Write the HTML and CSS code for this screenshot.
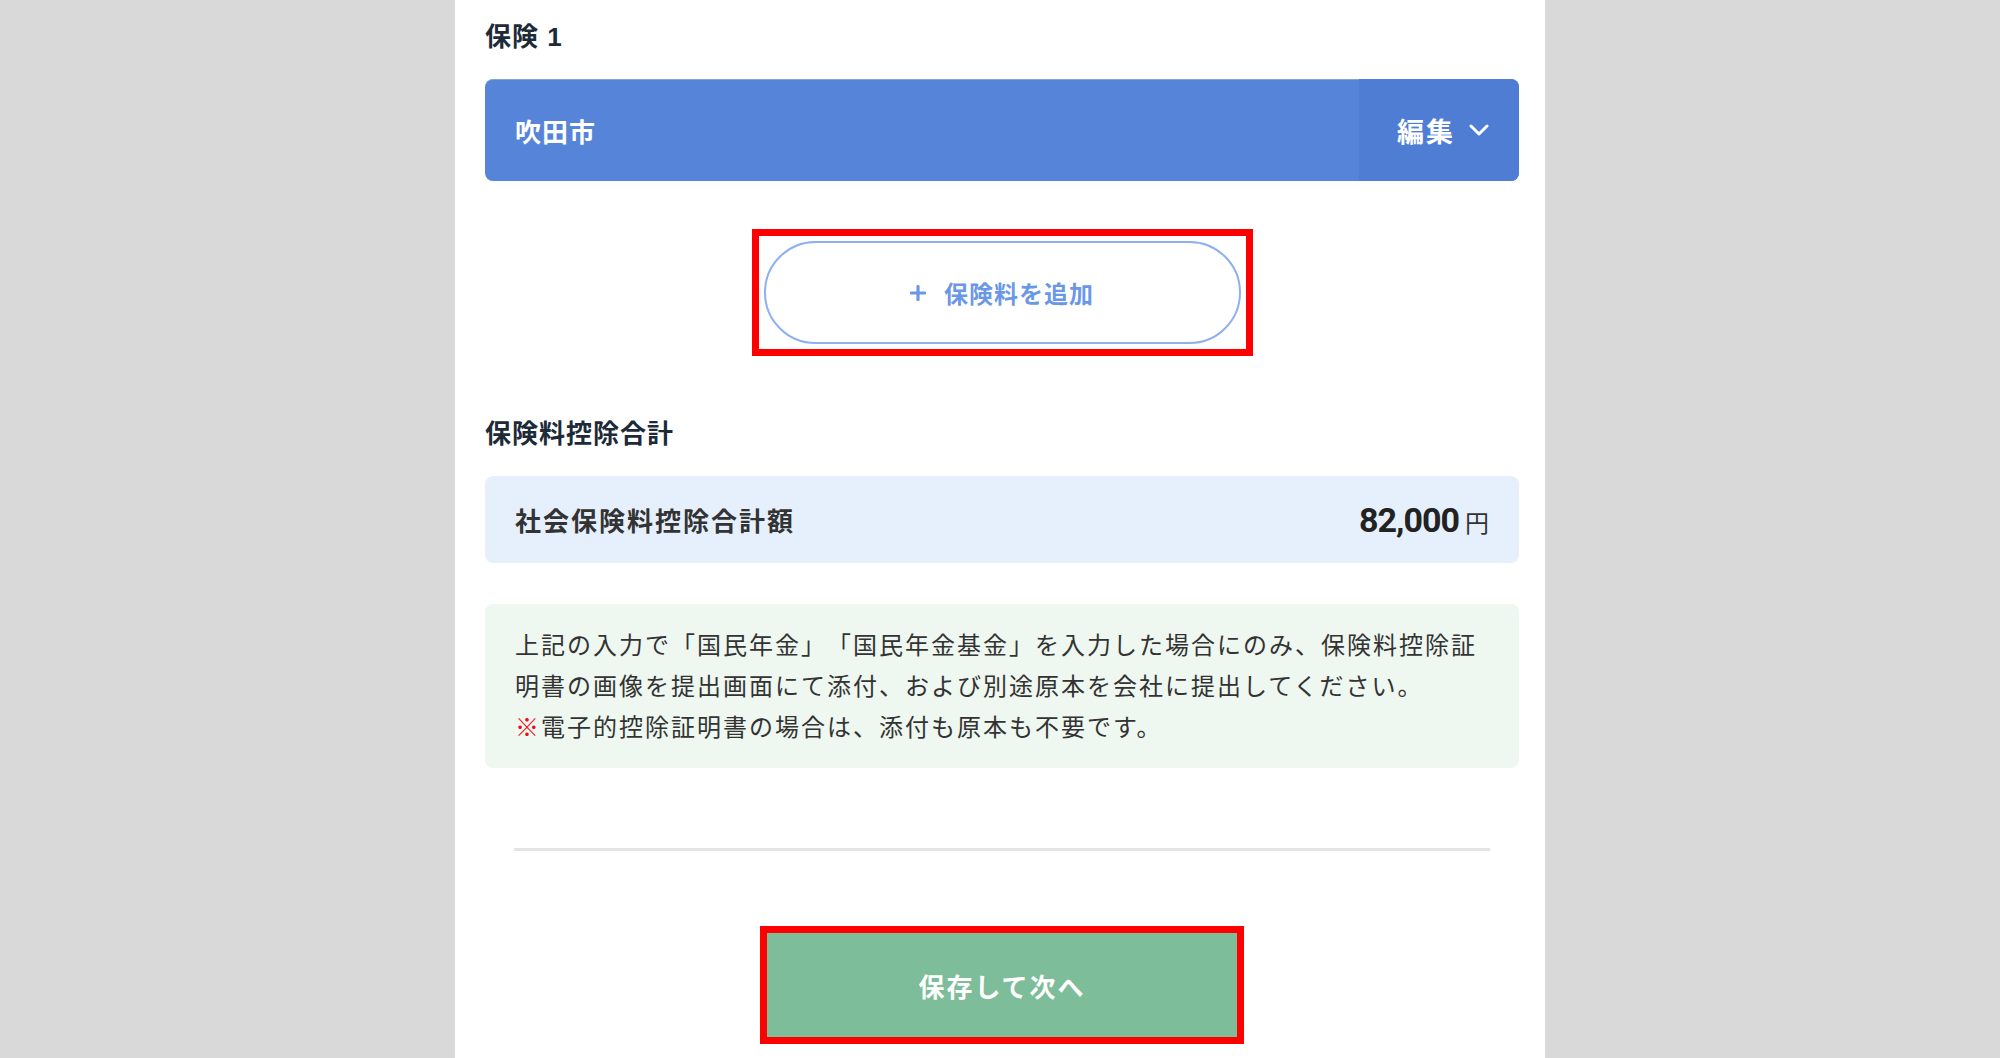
FILE: index.html
```html
<!DOCTYPE html>
<html lang="ja">
<head>
    <meta charset="UTF-8">
    <meta name="viewport" content="width=device-width, initial-scale=1.0">
    <title>社会保険料控除</title>
    <link rel="stylesheet" href="styles.css">
</head>
<body>
    <main class="page">
        <section class="insurance">
            <h2 class="section-title">保険 1</h2>
            <div class="entry-bar">
                <span class="entry-name">吹田市</span>
                <button class="entry-edit" type="button">
                    <span>編集</span>
                    <svg class="chevron" width="20" height="12" viewBox="0 0 20 12" aria-hidden="true">
                        <path d="M2 2 L10 10 L18 2" fill="none" stroke="#fff" stroke-width="3" stroke-linecap="round" stroke-linejoin="round"/>
                    </svg>
                </button>
            </div>
            <div class="action-row">
                <div class="highlight highlight-gap">
                    <button class="add-btn" type="button">
                        <svg class="plus" width="16" height="16" viewBox="0 0 16 16" aria-hidden="true">
                            <path d="M8 1.5 V14.5 M1.5 8 H14.5" stroke="#6b98e6" stroke-width="3.2" stroke-linecap="round"/>
                        </svg>
                        <span>保険料を追加</span>
                    </button>
                </div>
            </div>
        </section>

        <section class="total">
            <h2 class="section-title">保険料控除合計</h2>
            <div class="total-box">
                <span class="total-label">社会保険料控除合計額</span>
                <span class="total-value"><b>82,000</b><small>円</small></span>
            </div>
            <div class="notice">
                <p>上記の入力で「国民年金」「国民年金基金」を入力した場合にのみ、保険料控除証明書の画像を提出画面にて添付、および別途原本を会社に提出してください。</p>
                <p><span class="mark">※</span>電子的控除証明書の場合は、添付も原本も不要です。</p>
            </div>
        </section>

        <hr class="divider">

        <div class="action-row submit-row">
            <div class="highlight">
                <button class="submit-btn" type="button">保存して次へ</button>
            </div>
        </div>
    </main>
</body>
</html>
```

FILE: styles.css
```css
html, body {
    margin: 0;
    padding: 0;
    height: 100%;
}

body {
    background-color: #d9d9d9;
    font-family: "Liberation Sans", "Noto Sans CJK JP", sans-serif;
    color: #333;
    overflow: hidden;
}

.page {
    width: 1090px;
    height: 1058px;
    margin: 0 auto;
    padding: 19px 26px 0 30px;
    box-sizing: border-box;
    background-color: #fff;
}

.section-title {
    margin: 0 0 24px 0;
    font-size: 26px;
    line-height: 36px;
    letter-spacing: 1px;
    font-weight: bold;
    color: #1d2a38;
}

/* 保険の行 */
.entry-bar {
    display: flex;
    height: 102px;
    border-radius: 8px;
    overflow: hidden;
    background-color: #5684d8;
    box-shadow: inset 0 1px 0 rgba(255, 255, 255, 0.25);
}

.entry-name {
    flex: 1;
    display: flex;
    align-items: center;
    padding-left: 30px;
    font-size: 26px;
    font-weight: bold;
    letter-spacing: 1px;
    color: #fff;
}

.entry-edit {
    display: flex;
    align-items: center;
    gap: 14px;
    width: 160px;
    padding: 0 28px 0 38px;
    box-sizing: border-box;
    border: none;
    background-color: #4f7dd3;
    color: #fff;
    font-family: inherit;
    font-size: 27px;
    font-weight: bold;
    letter-spacing: 2px;
    cursor: pointer;
}

.chevron {
    flex-shrink: 0;
}

/* 赤枠で囲まれたボタン */
.action-row {
    display: flex;
    justify-content: center;
    margin-top: 48px;
}

.highlight {
    border: 7px solid #ff0000;
}

.highlight-gap {
    padding: 5px;
}

.add-btn {
    display: flex;
    align-items: center;
    justify-content: center;
    gap: 18px;
    width: 477px;
    height: 103px;
    border: 2px solid #8eb0f0;
    border-radius: 52px;
    background-color: #fff;
    color: #6b98e6;
    font-family: inherit;
    font-size: 24px;
    font-weight: bold;
    letter-spacing: 1px;
    cursor: pointer;
}

.add-btn:hover {
    background-color: #f5f8ff;
}

/* 合計 */
.total {
    margin-top: 60px;
}

.total-box {
    display: flex;
    align-items: center;
    justify-content: space-between;
    height: 87px;
    padding: 0 30px;
    border-radius: 8px;
    background-color: #e6f0fd;
}

.total-label {
    font-size: 26px;
    font-weight: bold;
    letter-spacing: 2px;
    color: #333;
}

.total-value {
    display: flex;
    align-items: baseline;
    color: #222;
}

.total-value b {
    font-family: Roboto, "Liberation Sans", sans-serif;
    font-size: 34px;
    letter-spacing: -1px;
}

.total-value small {
    margin-left: 6px;
    font-size: 24px;
    color: #333;
}

.notice {
    margin-top: 41px;
    padding: 21px 30px 20px 30px;
    border-radius: 8px;
    background-color: #eef7f0;
}

.notice p {
    margin: 0;
    font-size: 24px;
    line-height: 41px;
    letter-spacing: 2px;
    text-spacing-trim: space-all;
    color: #333;
}

.mark {
    color: #e8101e;
}

.divider {
    margin: 80px 29px 0 29px;
    border: none;
    border-top: 3px solid #e4e4e4;
}

.submit-row {
    margin-top: 75px;
}

.submit-btn {
    display: block;
    width: 470px;
    height: 104px;
    border: none;
    background-color: #7dbd99;
    color: #fff;
    font-family: inherit;
    font-size: 26px;
    font-weight: bold;
    letter-spacing: 2px;
    cursor: pointer;
}

.submit-btn:hover {
    background-color: #72b28e;
}
```
